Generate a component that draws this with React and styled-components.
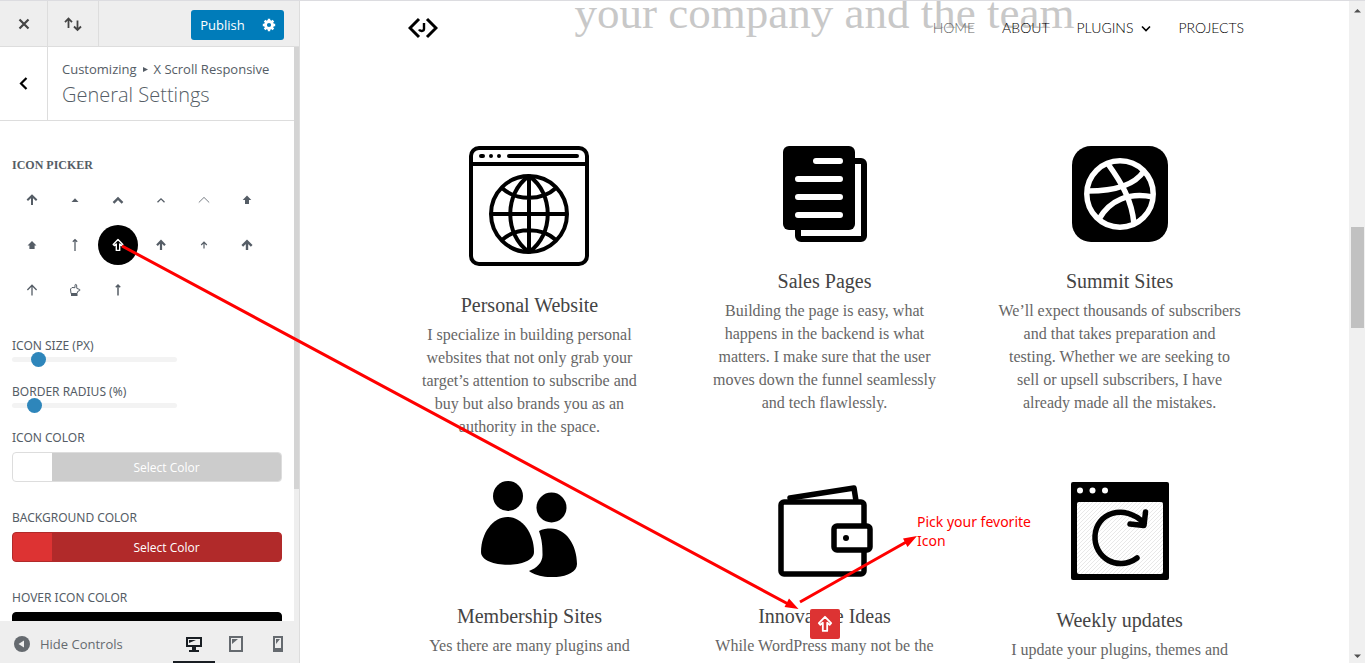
import React, { useState } from "react";
import styled, { createGlobalStyle } from "styled-components";

const GlobalStyle = createGlobalStyle`
  * { box-sizing: border-box; }
  body { margin: 0; background: #fff; }
  button { font: inherit; border: 0; padding: 0; background: none; cursor: pointer; }
  svg { display: block; flex: none; }
`;

const sans = `"Open Sans", "Noto Sans", sans-serif`;
const serif = `"Liberation Serif", serif`;

/* ---------- shell ---------- */

const Shell = styled.div`
  position: relative;
  display: flex;
  height: 100vh;
  overflow: hidden;
  border-top: 1px solid #dcdce0;
`;

const Sidebar = styled.aside`
  display: flex;
  flex-direction: column;
  flex: 0 0 300px;
  border-right: 1px solid #ddd;
  font: 13px/18px ${sans};
  color: #555d66;
`;

const TopBar = styled.header`
  display: flex;
  flex: 0 0 46px;
  background: #eee;
  border-bottom: 1px solid #ddd;
`;

const BarButton = styled.button`
  display: grid;
  place-items: center;
  width: ${(p) => p.$width}px;
  border-right: 1px solid #ddd;
`;

const PublishGroup = styled.div`
  display: flex;
  margin: 9px 15px auto auto;
  height: 30px;
  border-radius: 3px;
  overflow: hidden;
  background: #007cba;
`;

const PublishButton = styled.button`
  display: grid;
  place-items: center;
  width: ${(p) => p.$width}px;
  color: #fff;
  font-weight: 500;
`;

const PanelScroll = styled.div`
  display: flex;
  flex: 1;
  min-height: 0;
`;

const Panel = styled.div`
  flex: 1;
  overflow: hidden;
`;

const PanelTrack = styled.div`
  flex: 0 0 5px;
  background: #eee;
`;

const PanelThumb = styled.div`
  height: 77%;
  background: #d4d4d4;
`;

const PanelHead = styled.div`
  display: flex;
  height: 74px;
  border-bottom: 1px solid #ddd;
`;

const PanelTitle = styled.div`
  padding: 13px 14px;
`;

const Crumbs = styled.div`
  display: flex;
  align-items: center;
  gap: 6px;
  white-space: nowrap;
`;

const PanelName = styled.h2`
  margin: 0;
  font-size: 20px;
  font-weight: 300;
  line-height: 34px;
`;

const Controls = styled.div`
  padding: 37px 12px 0;
`;

const ControlLabel = styled.label`
  display: block;
  line-height: 14px;
  font-family: "Noto Sans", ${sans};
  font-size: 12px;
  text-transform: uppercase;
`;

const PickerTitle = styled.h3`
  margin: 0 0 8px;
  font: bold 12px/14px ${serif};
`;

const PickerGrid = styled.div`
  display: grid;
  grid-template-columns: repeat(6, 40px);
  grid-auto-rows: 40px;
  gap: 5px 3px;
  margin-bottom: 29px;
`;

const PickerOption = styled.button`
  display: grid;
  place-items: center;
  border-radius: 50%;
  color: ${(p) => (p.$active ? "#fff" : "#555d66")};
  background: ${(p) => (p.$active ? "#000" : "none")};
`;

const SliderControl = styled.div`
  margin-bottom: 18px;
`;

const Range = styled.input`
  appearance: none;
  display: block;
  width: 165px;
  height: 15px;
  margin: -1px 0 0;
  background: none;
  &::-webkit-slider-runnable-track {
    height: 5px;
    border-radius: 3px;
    background: #f3f3f3;
  }
  &::-webkit-slider-thumb {
    appearance: none;
    width: 15px;
    height: 15px;
    margin-top: -5px;
    border-radius: 50%;
    background: #2e86bb;
  }
`;

const ColorControl = styled.div`
  margin-bottom: 29px;
`;

const ColorButton = styled.button`
  display: flex;
  width: 100%;
  height: 30px;
  margin-top: 7px;
  border-radius: 4px;
  overflow: hidden;
  border: 1px solid ${(p) => p.$edge};
  background: ${(p) => p.$swatch};
  color: #fff;
  font: 500 12px/30px ${sans};
`;

const ColorText = styled.span`
  flex: 1;
  margin-left: 39px;
  background: ${(p) => p.$fill};
`;

const FooterBar = styled.footer`
  display: flex;
  flex: 0 0 42px;
  background: #eee;
  padding: 0 0 0 13px;
`;

const HideButton = styled.button`
  display: flex;
  align-items: center;
  gap: 9px;
  margin-right: auto;
  padding-top: 4px;
  color: #656a6f;
`;

const DeviceButton = styled.button`
  display: grid;
  place-items: center;
  width: 42px;
  color: ${(p) => (p.$active ? "#191e23" : "#656a6f")};
  border-top: 5px solid transparent;
  border-bottom: 2px solid ${(p) => (p.$active ? "#191e23" : "transparent")};
`;

/* ---------- preview ---------- */

const Preview = styled.main`
  position: relative;
  flex: 1;
  overflow: hidden;
`;

const Hero = styled.h1`
  margin: 0 0 105px;
  height: 40px;
  font: 45px/25px ${serif};
  color: #c8c8c8;
  text-align: center;
  white-space: nowrap;
`;

const SiteHeader = styled.header`
  position: absolute;
  top: 0;
  left: 10%;
  right: 10%;
  display: flex;
  align-items: center;
  justify-content: space-between;
  padding: 12px 0 0 3px;
`;

const Nav = styled.nav`
  display: flex;
  align-items: center;
  gap: 27px;
  font: 300 14px/24px Lato, sans-serif;
`;

const NavLink = styled.a`
  display: flex;
  align-items: center;
  gap: 8px;
  color: ${(p) => (p.$dim ? "#666" : "#000")};
  text-decoration: none;
`;

const Features = styled.section`
  display: grid;
  grid-template-columns: repeat(3, 1fr);
  gap: 43px 46px;
  width: 80%;
  margin: 0 auto;
`;

const Feature = styled.article`
  display: flex;
  flex-direction: column;
  align-items: center;
  text-align: center;
  white-space: nowrap;
`;

const FeatureTitle = styled.h2`
  margin: 29px 0 8px;
  font: 20px/20px ${serif};
  color: #444;
`;

const FeatureText = styled.p`
  margin: 0;
  font: 16px/23px ${serif};
  color: #666;
`;

const ScrollTop = styled.button`
  position: absolute;
  left: calc(50% - 15px);
  bottom: 24px;
  display: grid;
  place-items: center;
  width: 30px;
  height: 30px;
  border-radius: 2px;
  background: #dd3333;
  color: #fff;
`;

const PageTrack = styled.div`
  display: flex;
  flex-direction: column;
  align-items: center;
  flex: 0 0 16px;
  padding: 7px 0 4px;
  background: #f0f0f0;
`;

const PageThumb = styled.div`
  width: 13px;
  height: 101px;
  margin: 214px 0 auto;
  background: #c1c1c1;
`;

const Markup = styled.svg`
  position: absolute;
  top: -1px;
  left: 0;
  pointer-events: none;
`;

const Note = styled.p`
  position: absolute;
  top: 511px;
  left: 917px;
  margin: 0;
  font: 14px/19px "Noto Sans", sans-serif;
  color: #f00;
`;

/* ---------- drawings ---------- */

const Glyph = ({ size = 14, width = size, children, ...rest }) => (
  <svg width={width} height={size} viewBox={`0 0 ${width} ${size}`} fill="none" stroke="currentColor" aria-hidden="true" {...rest}>
    {children}
  </svg>
);

const hollowArrow = <path strokeWidth="1.4" strokeLinejoin="round" d="M7 1.4 11.8 6.4 10.6 7.6 8.7 6V12.4H5.3V6L3.4 7.6 2.2 6.4Z" />;

const pickerIcons = [
  ["arrow", <path strokeWidth="2" d="M7 12V3M2.3 7.3 7 2.7l4.7 4.6" />],
  ["caret", <path fill="currentColor" stroke="none" d="M3.5 9 7 5.2 10.5 9Z" />],
  ["chevron", <path strokeWidth="2.4" d="M2.5 9.8 7 5.4l4.5 4.4" />],
  ["small chevron", <path strokeWidth="1.3" d="M3.5 9.3 7 5.8 10.5 9.3" />],
  ["thin chevron", <path strokeWidth="0.8" d="M1.8 9.5 7 4.4l5.2 5.1" />],
  ["block arrow", <path fill="currentColor" stroke="none" d="M7 2.5 11.3 7H9v4H5V7H2.700Z" />],
  ["wide arrow", <path fill="currentColor" stroke="none" d="M7 3 11.500 7.500H9.600V11H4.400V7.500H2.500Z" />],
  ["long arrow", <path strokeWidth="1.3" d="M7 13V1.5M4.800 3.8 7 1.6l2.200 2.200" />],
  ["outline arrow", hollowArrow],
  ["heavy arrow", <path strokeWidth="2.2" d="M7 12V3M3 7.3 7 3l4 4.3" />],
  ["small arrow", <path strokeWidth="1.2" d="M7 10.5V4.4M4.2 7 7 4.2 9.8 7" />],
  ["bold arrow", <path strokeWidth="2.4" d="M7 12V3.4M2.300 7.8 7 3.2l4.700 4.600" />],
  ["light arrow", <path strokeWidth="1.3" d="M7 12.5V2.6M2.4 7 7 2.3 11.6 7" />],
  ["hand", <><path strokeWidth="1" d="M3 10.500 2.500 6 4 4.500l3 .2V2c0-.8 1.500-.8 1.600 0l.2 3.400 3 1.100v1l-2 .8-.8 2.200Z" /><path fill="currentColor" stroke="none" d="M3 10.500h6.500V13H3Z" /></>],
  ["slim arrow", <path strokeWidth="1.5" d="M7 12.5V2.2M4.8 4.3 7 2l2.2 2.3" />],
];

const BrowserGlobe = () => (
  <Glyph size={120} stroke="#000" strokeWidth="4">
    <rect x="2" y="2" width="116" height="116" rx="8" />
    <path d="M2 18H118" />
    <path strokeLinecap="round" d="M12 10h2M22 10h0M30 10h0M40 10h68" />
    <circle cx="60" cy="68" r="38" />
    <path d="M60 30v76M22 68h76M60 30c-25 17-25 59 0 76M60 30c25 17 25 59 0 76M33 42c14 13 40 13 54 0M33 94c14-13 40-13 54 0" />
  </Glyph>
);

const Pages = () => (
  <Glyph size={96} stroke="none">
    <rect x="21" y="15" width="66" height="78" rx="3" fill="#fff" stroke="#000" strokeWidth="6" />
    <rect x="6" y="0" width="72" height="84" rx="6" fill="#000" />
    <path stroke="#fff" strokeWidth="6" strokeLinecap="round" d="M39 15h24M21 33h42M21 51h42M21 69h42" />
  </Glyph>
);

const Ball = () => (
  <Glyph size={96} stroke="#fff" strokeWidth="5.5">
    <rect width="96" height="96" rx="19" fill="#000" stroke="none" />
    <circle cx="48" cy="48" r="33.2" />
    <path d="M36 18C49 36 60 54 62 78M16 45C42 45 62 40 72 25M27 73C38 54 57 46 81 51" />
  </Glyph>
);

const People = () => (
  <Glyph size={96} stroke="none" fill="#000">
    <circle cx="27" cy="15" r="15" />
    <circle cx="70.5" cy="26.5" r="15" />
    <path d="M0 71C0 52 12 36 26.5 36S53 52 53 71C53 88 0 88 0 71Z" />
    <path d="M58 50C61 48 66 47.5 70 47.5C85 47.5 96 64 96 83C96 98 61 100 48 90C56 87 62 81 61.5 73C61.5 65 61 59 58 50Z" />
  </Glyph>
);

const Wallet = () => (
  <Glyph size={96} stroke="#000" strokeWidth="5.5" strokeLinejoin="round">
    <path strokeLinecap="round" d="M13 17 77 7 79 20" />
    <rect x="4" y="21" width="83" height="72" rx="3" />
    <rect x="57" y="45" width="36" height="24" rx="3" fill="#fff" />
    <circle cx="69" cy="57" r="3" fill="#000" stroke="none" />
  </Glyph>
);

const Refresh = () => (
  <Glyph size={100} stroke="none">
    <defs>
      <pattern id="hatch" width="4" height="4" patternUnits="userSpaceOnUse">
        <rect width="4" height="4" fill="#fff" />
        <path d="M0 4 4 0" stroke="#e8e8e8" strokeWidth="1" />
      </pattern>
    </defs>
    <rect x="1" y="1" width="98" height="98" rx="2" fill="#000" />
    <rect x="7" y="21" width="86" height="72" rx="2" fill="url(#hatch)" />
    <g fill="#fff">
      <circle cx="10" cy="9.5" r="3" />
      <circle cx="22.5" cy="9.5" r="3" />
      <circle cx="35" cy="9.5" r="3" />
    </g>
    <path stroke="#000" strokeWidth="5.5" strokeLinecap="round" strokeLinejoin="round" d="M67 77C48 91 24 77 25 55C26 32 54 22 74 42M75.5 31 74 44.5 60 43" />
  </Glyph>
);

const features = [
  [BrowserGlobe, "Personal Website", ["I specialize in building personal", "websites that not only grab your", "target’s attention to subscribe and", "buy but also brands you as an", "authority in the space."]],
  [Pages, "Sales Pages", ["Building the page is easy, what", "happens in the backend is what", "matters. I make sure that the user", "moves down the funnel seamlessly", "and tech flawlessly."]],
  [Ball, "Summit Sites", ["We’ll expect thousands of subscribers", "and that takes preparation and", "testing. Whether we are seeking to", "sell or upsell subscribers, I have", "already made all the mistakes."]],
  [People, "Membership Sites", ["Yes there are many plugins and"]],
  [Wallet, "Innovative Ideas", ["While WordPress many not be the"]],
  [Refresh, "Weekly updates", ["I update your plugins, themes and"]],
];

const colors = [
  ["Icon color", "#fff", "#ccc", "#ddd"],
  ["Background color", "#dd3333", "#b12a2a", "#b12a2a"],
  ["Hover icon color", "#000", "#000", "#000"],
];

const gearTeeth = [0, 45, 90, 135];

export default function App() {
  const [picked, setPicked] = useState(8);
  return (
    <>
      <GlobalStyle />
      <Shell>
        <Sidebar>
          <TopBar>
            <BarButton $width={48} aria-label="Close">
              <Glyph size={12} stroke="#444" strokeWidth="2.2"><path d="M1.5 1.5l9 9M10.5 1.5l-9 9" /></Glyph>
            </BarButton>
            <BarButton $width={51} aria-label="Reorder">
              <Glyph size={18} stroke="#444" strokeWidth="1.8"><path d="M4.5 13V4M1 7.2 4.5 3.5 8 7.2M13.5 5.5v9M10 11.5l3.5 3.5 3.5-3.5" /></Glyph>
            </BarButton>
            <PublishGroup>
              <PublishButton $width={63}>Publish</PublishButton>
              <PublishButton $width={30} aria-label="Publish settings">
                <Glyph size={14} stroke="#fff">
                  <circle cx="7" cy="7" r="3.5" strokeWidth="2.8" />
                  {gearTeeth.map((a) => (
                    <path key={a} strokeWidth="2.4" d="M7 .8V3M7 11v2.2" transform={`rotate(${a} 7 7)`} />
                  ))}
                </Glyph>
              </PublishButton>
            </PublishGroup>
          </TopBar>
          <PanelScroll>
            <Panel>
              <PanelHead>
                <BarButton $width={48} aria-label="Back">
                  <Glyph size={14} stroke="#000" strokeWidth="2.2"><path d="M9.500 1 4 6.500l5.500 5.500" /></Glyph>
                </BarButton>
                <PanelTitle>
                  <Crumbs>
                    Customizing
                    <Glyph size={5}><path fill="currentColor" stroke="none" d="M0 0 5 2.5 0 5Z" /></Glyph>
                    X Scroll Responsive
                  </Crumbs>
                  <PanelName>General Settings</PanelName>
                </PanelTitle>
              </PanelHead>
              <Controls>
                <PickerTitle>ICON PICKER</PickerTitle>
                <PickerGrid>
                  {pickerIcons.map(([name, art], i) => (
                    <PickerOption key={name} aria-label={name} $active={i === picked} onClick={() => setPicked(i)}>
                      <Glyph>{art}</Glyph>
                    </PickerOption>
                  ))}
                </PickerGrid>
                <SliderControl>
                  <ControlLabel htmlFor="size">Icon size (px)</ControlLabel>
                  <Range id="size" type="range" max="150" defaultValue="19" />
                </SliderControl>
                <SliderControl>
                  <ControlLabel htmlFor="radius">Border radius (%)</ControlLabel>
                  <Range id="radius" type="range" max="150" defaultValue="15" />
                </SliderControl>
                {colors.map(([label, swatch, fill, edge], i) => (
                  <ColorControl key={label}>
                    <ControlLabel htmlFor={`color-${i}`}>{label}</ControlLabel>
                    <ColorButton id={`color-${i}`} $swatch={swatch} $edge={edge}>
                      <ColorText $fill={fill}>Select Color</ColorText>
                    </ColorButton>
                  </ColorControl>
                ))}
              </Controls>
            </Panel>
            <PanelTrack><PanelThumb /></PanelTrack>
          </PanelScroll>
          <FooterBar>
            <HideButton>
              <Glyph size={18} stroke="none">
                <circle cx="9" cy="9" r="8" fill="#656a6f" />
                <path d="M11 5.5v7L5.5 9Z" fill="#eee" />
              </Glyph>
              Hide Controls
            </HideButton>
            <DeviceButton $active aria-label="Desktop">
              <Glyph size={18}>
                <path strokeWidth="2" d="M2 3h14v8H2Z" />
                <path fill="currentColor" stroke="none" d="M4 5h7L4 8ZM7 12h4v3h3v2H4v-2h3Z" />
              </Glyph>
            </DeviceButton>
            <DeviceButton aria-label="Tablet">
              <Glyph size={18}>
                <path strokeWidth="2" d="M3 2h12v14H3Z" />
                <path fill="currentColor" stroke="none" d="M5 4h6L5 9Z" />
              </Glyph>
            </DeviceButton>
            <DeviceButton aria-label="Mobile">
              <Glyph size={18}>
                <path strokeWidth="2" d="M5 2h8v13H5ZM5 15h8" />
                <path fill="currentColor" stroke="none" d="M7 4h4L7 9ZM4 13h10v4H4Z" />
              </Glyph>
            </DeviceButton>
          </FooterBar>
        </Sidebar>

        <Preview>
          <Hero>your company and the team</Hero>
          <SiteHeader>
            <Glyph size={30} stroke="#000" strokeWidth="3">
              <path d="M11 6 2 15l9 9M19 6l9 9-9 9" />
              <path strokeWidth="2.4" d="M16 10v6c0 2.5-4 2.5-5 .5" />
            </Glyph>
            <Nav>
              <NavLink href="#home" $dim>HOME</NavLink>
              <NavLink href="#about">ABOUT</NavLink>
              <NavLink href="#plugins">
                PLUGINS
                <Glyph size={10} strokeWidth="1.6"><path d="M1 3.5 5 7.5 9 3.5" /></Glyph>
              </NavLink>
              <NavLink href="#projects">PROJECTS</NavLink>
            </Nav>
          </SiteHeader>
          <Features>
            {features.map(([Art, title, lines]) => (
              <Feature key={title}>
                <Art />
                <FeatureTitle>{title}</FeatureTitle>
                <FeatureText>
                  {lines.map((line) => (
                    <React.Fragment key={line}>{line}<br /></React.Fragment>
                  ))}
                </FeatureText>
              </Feature>
            ))}
          </Features>
          <ScrollTop aria-label="Scroll to top">
            <svg width="18" height="18" viewBox="0 0 14 14" fill="none" stroke="currentColor">{hollowArrow}</svg>
          </ScrollTop>
        </Preview>

        <PageTrack>
          <Glyph width={7} size={5} stroke="none" fill="#505050"><path d="M0 4.5 3.5 1 7 4.500Z" /></Glyph>
          <PageThumb />
          <Glyph width={7} size={5} stroke="none" fill="#505050"><path d="M0 .5 3.5 4 7 .5Z" /></Glyph>
        </PageTrack>

        <Markup width="1040" height="640" viewBox="0 0 1040 640" stroke="#f00" strokeWidth="3" fill="#f00" aria-hidden="true">
          <path d="M122 246 790 605M800 602 908 541" />
          <path stroke="none" d="M798.5 609 784.5 607 789 598.5ZM917 536 903 538.5 907.5 547Z" />
        </Markup>
        <Note>Pick your fevorite<br />Icon</Note>
      </Shell>
    </>
  );
}
